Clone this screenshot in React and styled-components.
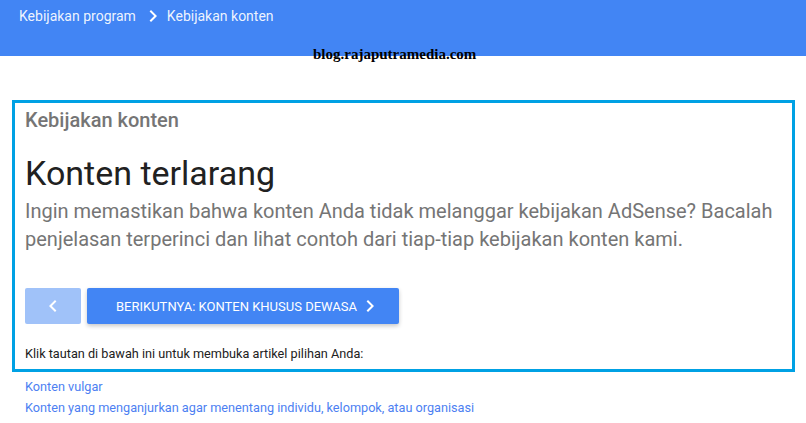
import React from "react";
import styled, { createGlobalStyle } from "styled-components";

const links = [
  "Konten vulgar",
  "Konten yang menganjurkan agar menentang individu, kelompok, atau organisasi",
  "Konten yang mengancam atau berisi kekerasan"
];

const Chevron = ({ left }) => (
  <svg width="24" height="24" viewBox="0 0 24 24" fill="currentColor">
    {left ? (
      <path d="M15.41 7.41L14 6l-6 6 6 6 1.41-1.41L10.83 12z" />
    ) : (
      <path d="M10 6L8.59 7.41 13.17 12l-4.58 4.59L10 18l6-6z" />
    )}
  </svg>
);

export default () => {
  return (
    <Page>
      <GlobalStyle />
      <Header>
        <Crumb>Kebijakan program</Crumb>
        <CrumbIcon>
          <Chevron />
        </CrumbIcon>
        <Crumb>Kebijakan konten</Crumb>
      </Header>
      <Watermark>blog.rajaputramedia.com</Watermark>
      <Main>
        <Highlight>
          <Section>Kebijakan konten</Section>
          <Title>Konten terlarang</Title>
          <Lead>
            Ingin memastikan bahwa konten Anda tidak melanggar kebijakan
            AdSense? Bacalah penjelasan terperinci dan lihat contoh dari
            tiap-tiap kebijakan konten kami.
          </Lead>
          <Nav>
            <PrevButton>
              <Chevron left />
            </PrevButton>
            <NextButton>
              Berikutnya: Konten khusus dewasa
              <Chevron />
            </NextButton>
          </Nav>
          <Hint>Klik tautan di bawah ini untuk membuka artikel pilihan Anda:</Hint>
        </Highlight>
        <LinkList>
          {links.map((text, index) => (
            <LinkItem key={index} href="#">
              {text}
            </LinkItem>
          ))}
        </LinkList>
      </Main>
    </Page>
  );
};

const GlobalStyle = createGlobalStyle`
  html, body {
    margin: 0;
    padding: 0;
    background: #fff;
    overflow: hidden;
  }
  body {
    font-family: Roboto, "Liberation Sans", Arial, sans-serif;
  }
`;

const Page = styled.div`
  position: relative;
  width: 806px;
  height: 423px;
  overflow: hidden;
`;

const Header = styled.div`
  display: flex;
  align-items: flex-start;
  height: 56px;
  padding: 4px 0 0 19px;
  box-sizing: border-box;
  background: #4285f4;
  color: rgba(255, 255, 255, 0.92);
`;

const Crumb = styled.span`
  font-size: 14px;
  line-height: 24px;
`;

const CrumbIcon = styled.span`
  display: flex;
  margin: 0 2px 0 5px;
  color: #fff;
`;

const Watermark = styled.div`
  position: absolute;
  top: 45px;
  left: 313px;
  font-family: "Liberation Serif", "Times New Roman", serif;
  font-weight: bold;
  font-size: 15px;
  line-height: 18px;
  color: #000;
`;

const Main = styled.div`
  padding: 44px 11px 0 12px;
`;

const Highlight = styled.div`
  border: 3px solid #00a1e4;
  padding: 4px 10px 5px 10px;
`;

const Section = styled.div`
  font-size: 20px;
  line-height: 26px;
  font-weight: 500;
  color: #757575;
`;

const Title = styled.h1`
  margin: 20px 0 0 0;
  font-size: 34px;
  line-height: 40px;
  font-weight: 400;
  color: #212121;
`;

const Lead = styled.p`
  margin: 4px 0 0 0;
  font-size: 20px;
  line-height: 28px;
  color: #757575;
`;

const Nav = styled.div`
  display: flex;
  gap: 6px;
  margin-top: 35px;
`;

const PrevButton = styled.button`
  display: flex;
  align-items: center;
  justify-content: center;
  width: 56px;
  height: 36px;
  border: 0;
  border-radius: 2px;
  background: #a0c2f9;
  color: #fff;
  padding: 0;
`;

const NextButton = styled.button`
  display: flex;
  align-items: center;
  gap: 1px;
  height: 36px;
  padding: 0 17px 0 29px;
  border: 0;
  border-radius: 2px;
  background: #4285f4;
  color: #fff;
  font-family: Roboto, "Liberation Sans", Arial, sans-serif;
  font-size: 13px;
  text-transform: uppercase;
  box-shadow: 0 2px 4px rgba(0, 0, 0, 0.22);
`;

const Hint = styled.div`
  margin-top: 20px;
  font-size: 12.7px;
  line-height: 20px;
  color: #212121;
`;

const LinkList = styled.div`
  display: flex;
  flex-direction: column;
  align-items: flex-start;
  margin-top: 4px;
  padding-left: 13px;
`;

const LinkItem = styled.a`
  font-size: 12.7px;
  line-height: 21px;
  color: #4d7ff2;
  text-decoration: none;
`;
